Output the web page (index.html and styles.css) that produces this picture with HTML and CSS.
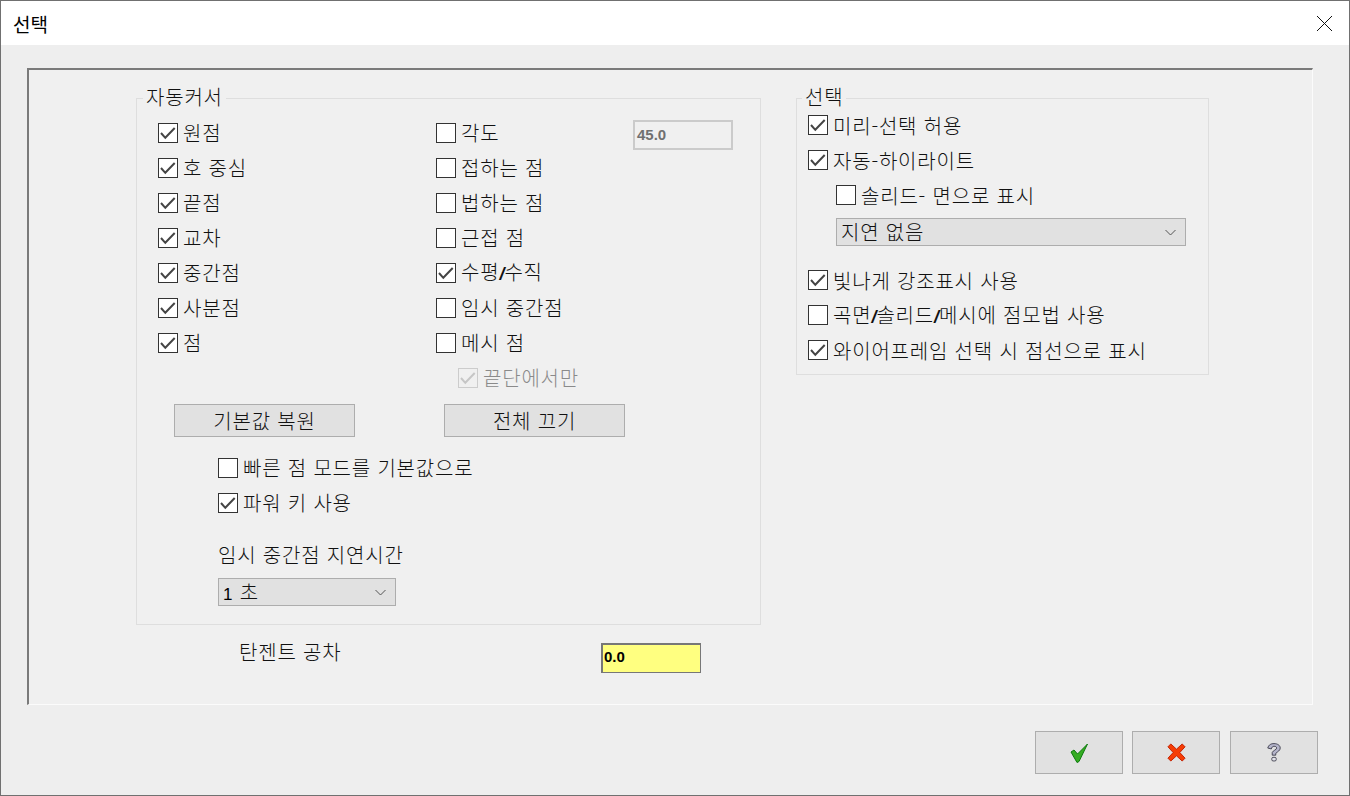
FILE: index.html
```html
<!DOCTYPE html>
<html lang="ko">
<head>
<meta charset="utf-8">
<title>선택</title>
<link rel="stylesheet" href="styles.css">
</head>
<body>
<div class="window">
  <header class="titlebar">
    <span class="title">선택</span>
    <svg class="close" width="17" height="17" viewBox="0 0 17 17"><path d="M1 1L16 16M16 1L1 16" stroke="#111" stroke-width="1" fill="none"/></svg>
  </header>
  <main class="content">
    <div class="panel">
      <div class="left">
        <section class="group group-snap">
          <span class="legend legend-snap">자동커서</span>
          <div class="snap-grid">
            <div class="snap-col">
              <label class="row"><span class="box on"><svg class="tick" viewBox="0 0 18 18"><path d="M2 9L6.300 13.800L15.700 4"/></svg></span><span>원점</span></label>
              <label class="row"><span class="box on"><svg class="tick" viewBox="0 0 18 18"><path d="M2 9L6.300 13.800L15.700 4"/></svg></span><span>호 중심</span></label>
              <label class="row"><span class="box on"><svg class="tick" viewBox="0 0 18 18"><path d="M2 9L6.300 13.800L15.700 4"/></svg></span><span>끝점</span></label>
              <label class="row"><span class="box on"><svg class="tick" viewBox="0 0 18 18"><path d="M2 9L6.300 13.800L15.700 4"/></svg></span><span>교차</span></label>
              <label class="row"><span class="box on"><svg class="tick" viewBox="0 0 18 18"><path d="M2 9L6.300 13.800L15.700 4"/></svg></span><span>중간점</span></label>
              <label class="row"><span class="box on"><svg class="tick" viewBox="0 0 18 18"><path d="M2 9L6.300 13.800L15.700 4"/></svg></span><span>사분점</span></label>
              <label class="row"><span class="box on"><svg class="tick" viewBox="0 0 18 18"><path d="M2 9L6.300 13.800L15.700 4"/></svg></span><span>점</span></label>
            </div>
            <div class="snap-col">
              <div class="row-with-field">
                <label class="row"><span class="box"></span><span>각도</span></label>
                <span class="field-disabled">45.0</span>
              </div>
              <label class="row"><span class="box"></span><span>접하는 점</span></label>
              <label class="row"><span class="box"></span><span>법하는 점</span></label>
              <label class="row"><span class="box"></span><span>근접 점</span></label>
              <label class="row"><span class="box on"><svg class="tick" viewBox="0 0 18 18"><path d="M2 9L6.300 13.800L15.700 4"/></svg></span><span>수평<b class="slash">/</b>수직</span></label>
              <label class="row"><span class="box"></span><span>임시 중간점</span></label>
              <label class="row"><span class="box"></span><span>메시 점</span></label>
              <label class="row row-disabled"><span class="box box-disabled"><svg class="tick tick-disabled" viewBox="0 0 18 18"><path d="M2 9L6.300 13.800L15.700 4"/></svg></span><span>끝단에서만</span></label>
            </div>
          </div>
          <div class="button-row">
            <button class="btn btn-wide" type="button">기본값 복원</button>
            <button class="btn btn-wide" type="button">전체 끄기</button>
          </div>
          <div class="indent">
            <label class="row"><span class="box"></span><span>빠른 점 모드를 기본값으로</span></label>
            <label class="row"><span class="box on"><svg class="tick" viewBox="0 0 18 18"><path d="M2 9L6.300 13.800L15.700 4"/></svg></span><span>파워 키 사용</span></label>
            <div class="delay-label">임시 중간점 지연시간</div>
            <div class="select select-small"><span class="select-text"><span class="latin">1</span> 초</span><svg class="chev" width="11" height="7" viewBox="0 0 11 7"><path d="M0.500 1L5.500 6L10.500 1"/></svg></div>
          </div>
        </section>
        <div class="tangent">
          <span class="tangent-label">탄젠트 공차</span>
          <span class="field-yellow">0.0</span>
        </div>
      </div>
      <section class="group group-select">
        <span class="legend legend-select">선택</span>
        <label class="row"><span class="box on"><svg class="tick" viewBox="0 0 18 18"><path d="M2 9L6.300 13.800L15.700 4"/></svg></span><span class="nudge">미리-선택 허용</span></label>
        <label class="row"><span class="box on"><svg class="tick" viewBox="0 0 18 18"><path d="M2 9L6.300 13.800L15.700 4"/></svg></span><span class="nudge">자동-하이라이트</span></label>
        <label class="row row-sub"><span class="box"></span><span class="nudge">솔리드- 면으로 표시</span></label>
        <div class="select select-wide"><span class="select-text">지연 없음</span><svg class="chev" width="11" height="7" viewBox="0 0 11 7"><path d="M0.500 1L5.500 6L10.500 1"/></svg></div>
        <label class="row"><span class="box on"><svg class="tick" viewBox="0 0 18 18"><path d="M2 9L6.300 13.800L15.700 4"/></svg></span><span class="nudge">빛나게 강조표시 사용</span></label>
        <label class="row"><span class="box"></span><span class="nudge">곡면<b class="slash">/</b>솔리드<b class="slash">/</b>메시에 점모법 사용</span></label>
        <label class="row"><span class="box on"><svg class="tick" viewBox="0 0 18 18"><path d="M2 9L6.300 13.800L15.700 4"/></svg></span><span class="nudge">와이어프레임 선택 시 점선으로 표시</span></label>
      </section>
    </div>
  </main>
  <footer class="footer">
    <button class="btn btn-icon" type="button" aria-label="확인">
      <svg width="19" height="20" viewBox="0 0 19 20"><path d="M1 9L4 7L7.500 11L17.500 1L9 18.500L7 19.500Z" fill="#35ad22" stroke="#0c7a0c" stroke-width="1"/></svg>
    </button>
    <button class="btn btn-icon btn-cancel" type="button" aria-label="취소">
      <svg width="19" height="19" viewBox="0 0 20 20"><path d="M1 4L4 1L10 6.500L16 1L19 4L13.500 10L19 16L16 19L10 13.500L4 19L1 16L6.500 10Z" fill="#f53d05" stroke="#c22000" stroke-width="1"/></svg>
    </button>
    <button class="btn btn-icon" type="button" aria-label="도움말">
      <svg width="16" height="21" viewBox="0 0 18 22"><path d="M2 6C3 2 6 1 9 1C13 1 16 3 16 6C16 9 13 10 11 12V14H7V11C8 8.500 12 8 12 6C12 4.500 10.500 4 9 4C7.500 4 6.500 5 6 7Z" fill="#b4b4ca" stroke="#3c3c4a" stroke-width="1"/><rect x="6.500" y="16.500" width="5" height="4" rx="1.500" fill="#e2e2ea" stroke="#3c3c4a" stroke-width="1"/></svg>
    </button>
  </footer>
</div>
</body>
</html>
```
FILE: styles.css
```css
* { box-sizing: border-box; }
html, body { margin: 0; padding: 0; }
body {
  width: 1350px;
  height: 796px;
  overflow: hidden;
  font-family: "Noto Sans CJK KR", "Noto Sans", sans-serif;
  font-size: 20px;
  font-weight: 200;
  letter-spacing: 0.8px;
  color: #111;
  background: #eeeeee;
}
.window {
  width: 1350px;
  height: 796px;
  display: flex;
  flex-direction: column;
  border: 1px solid #707070;
  background: #eeeeee;
}
.titlebar {
  height: 44px;
  flex: none;
  background: #fff;
  display: flex;
  align-items: center;
  justify-content: space-between;
  padding: 0 16px 0 12px;
}
.title { font-size: 19px; font-weight: 400; letter-spacing: 0; color: #000; }
.close { display: block; }
.content { flex: none; height: 660px; padding: 23px 0 0 26px; }
.panel {
  width: 1286px;
  height: 637px;
  display: flex;
  gap: 35px;
  padding: 28px 0 0 107px;
  background: #f0f0f0;
  border-top: 2px solid #7a7a7a;
  border-left: 2px solid #7a7a7a;
  border-right: 1px solid #fbfbfb;
  border-bottom: 1px solid #fbfbfb;
}
.left { width: 625px; flex: none; }
.group {
  position: relative;
  border: 1px solid #dedede;
}
.group-snap { width: 625px; height: 527px; padding: 24px 0 0 21px; }
.group-select { width: 413px; height: 277px; padding: 16px 0 0 11px; }
.legend {
  position: absolute;
  top: -15px;
  background: #f0f0f0;
  line-height: 25px;
  padding: 0 3px;
}
.legend-snap { left: 6px; }
.legend-select { left: 5px; }
.snap-grid { display: flex; }
.snap-col { width: 278px; }
.row {
  height: 20px;
  margin-bottom: 15px;
  display: flex;
  align-items: center;
  gap: 5px;
  line-height: 20px;
  white-space: pre;
}
.nudge { margin-top: 2px; }
.box {
  width: 20px;
  height: 20px;
  flex: none;
  border: 1px solid #333;
  background: #fff;
  display: block;
}
.box-disabled { border-color: #ccc; background: #f0f0f0; }
.tick { display: block; width: 18px; height: 18px; fill: none; stroke: #444; stroke-width: 2; }
.tick-disabled { stroke: #c6c6c6; }
.row-disabled { margin-left: 22px; color: #8a8a8a; }
.slash { font-family: "Liberation Sans", sans-serif; font-weight: 700; font-size: 18px; font-style: italic; letter-spacing: 0; }
.row-with-field { position: relative; }
.field-disabled {
  position: absolute;
  left: 197px;
  top: -3px;
  width: 100px;
  height: 30px;
  border: 2px solid #cbcbcb;
  padding-left: 2px;
  font-family: "Liberation Sans", sans-serif;
  font-size: 15px;
  font-weight: 700;
  line-height: 25px;
  letter-spacing: 0;
  color: #707070;
}
.button-row { display: flex; gap: 89px; margin: 1px 0 0 16px; }
.btn {
  background: #e1e1e1;
  border: 1px solid #adadad;
  font: inherit;
  letter-spacing: inherit;
  color: #111;
  padding: 0;
  display: flex;
  align-items: center;
  justify-content: center;
}
.btn-wide { width: 181px; height: 33px; }
.indent { padding: 21px 0 0 60px; }
.delay-label { line-height: 26px; margin-top: 29px; height: 26px; }
.select {
  margin-top: 10px;
  height: 28px;
  background: #e1e1e1;
  border: 1px solid #adadad;
  display: flex;
  align-items: center;
  justify-content: space-between;
  padding: 0 9px 0 4px;
}
.select-text { margin-top: -2px; }
.select-small { width: 178px; }
.select-wide { width: 350px; margin: -2px 0 24px 28px; }
.latin { font-family: "Liberation Sans", sans-serif; font-weight: 400; font-size: 17px; color: #000; }
.chev { display: block; fill: none; stroke: #555; stroke-width: 1; }
.row-sub { margin-left: 28px; }
.tangent { display: flex; align-items: center; height: 30px; margin-top: 18px; padding-left: 103px; }
.tangent-label { width: 362px; flex: none; margin-top: -13px; }
.field-yellow {
  width: 100px;
  height: 30px;
  background: #ffff80;
  border: 1px solid #777;
  border-top-width: 2px;
  border-left-width: 2px;
  padding-left: 1px;
  font-family: "Liberation Sans", sans-serif;
  font-size: 15px;
  font-weight: 700;
  line-height: 24px;
  letter-spacing: 0;
  color: #000;
}
.footer {
  flex: 1;
  display: flex;
  justify-content: flex-end;
  gap: 9px;
  padding: 26px 31px 0 0;
}
.btn-icon { width: 88px; height: 43px; }
.btn-cancel { margin-right: 1px; }
```
